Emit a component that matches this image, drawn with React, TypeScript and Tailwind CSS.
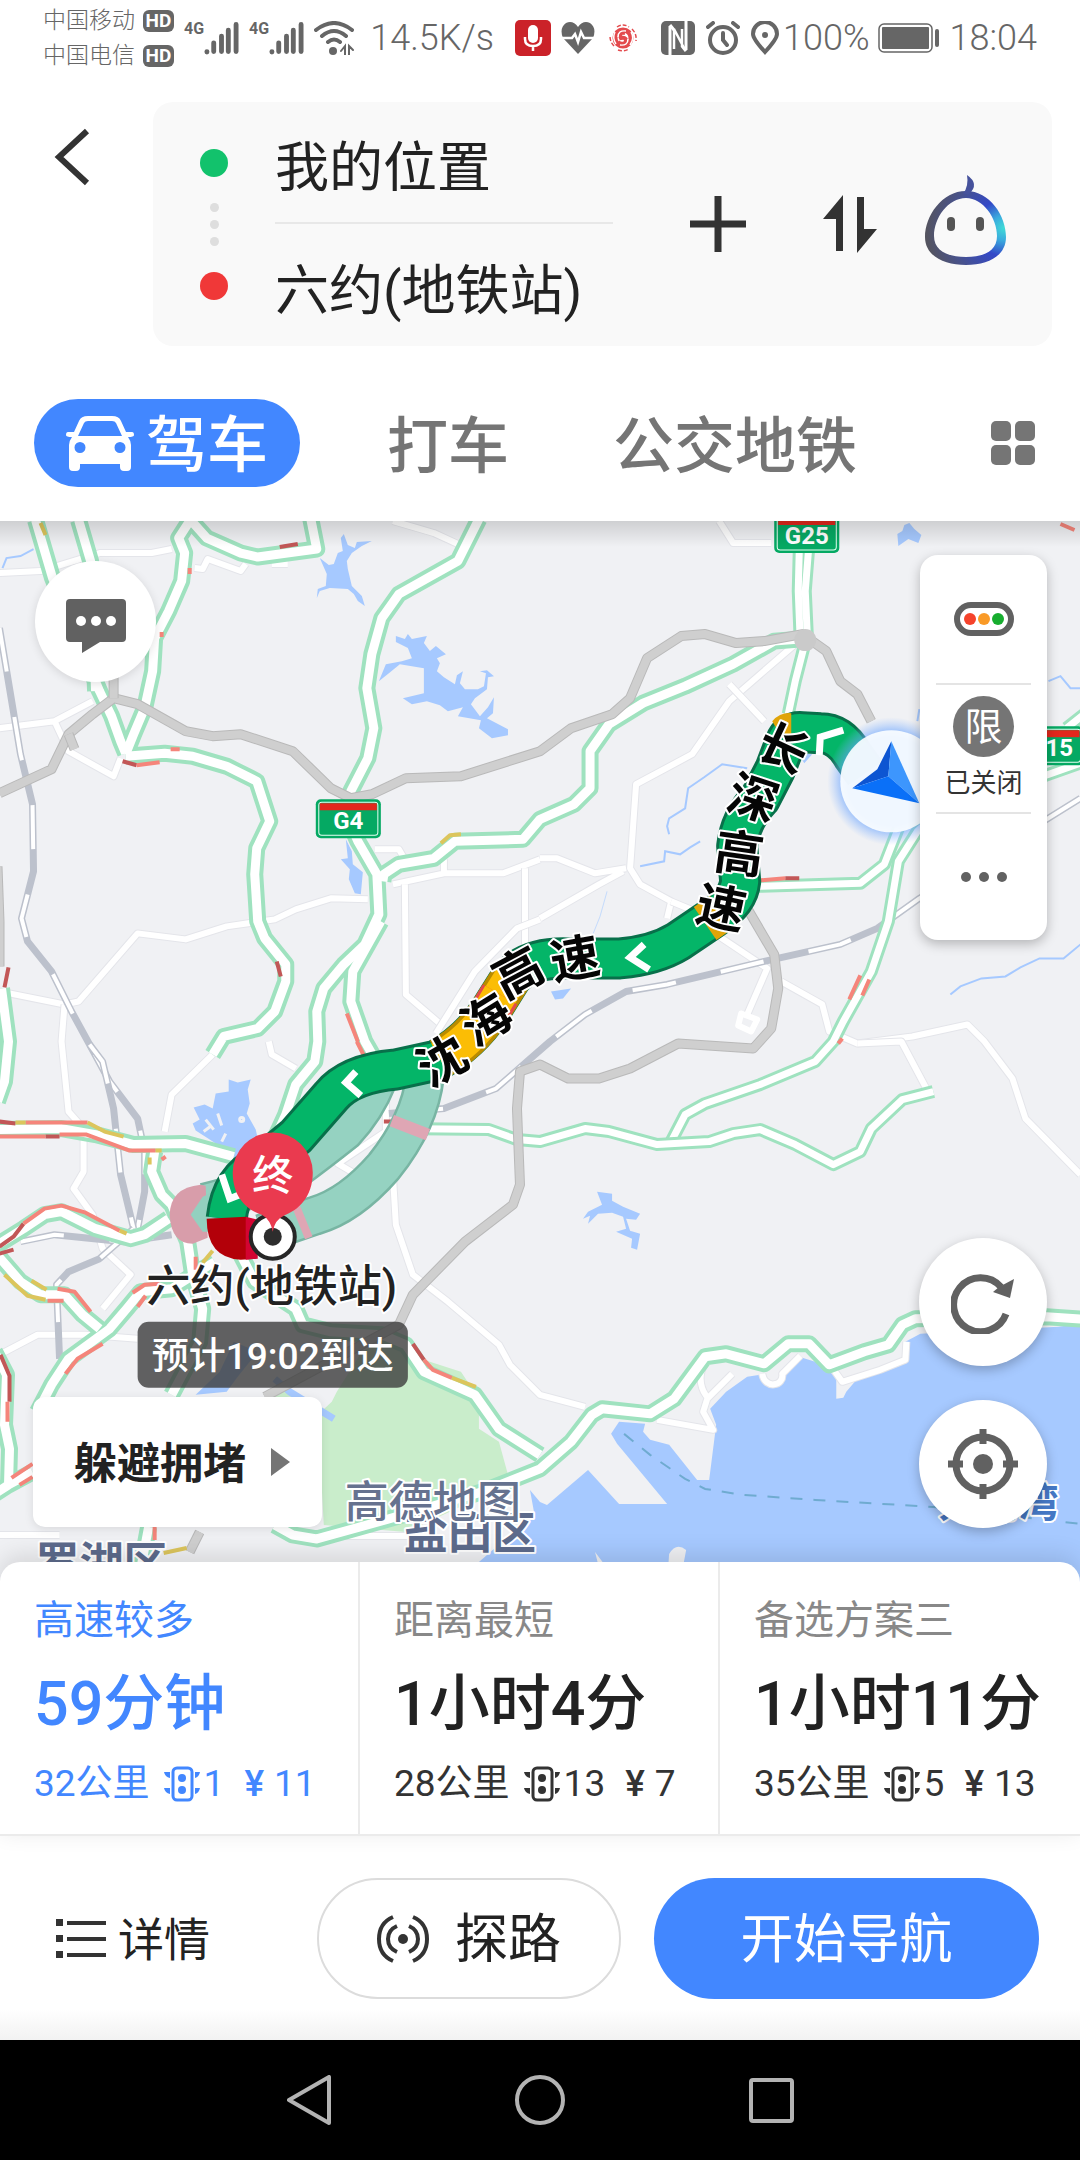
import { useState } from "react";
import type { ReactNode } from "react";

const ROUTES = [
  { name: "高速较多", time: "59分钟", distance: "32公里", lights: 1, toll: 11 },
  { name: "距离最短", time: "1小时4分", distance: "28公里", lights: 13, toll: 7 },
  { name: "备选方案三", time: "1小时11分", distance: "35公里", lights: 5, toll: 13 },
];

const SMALL_ROADS = [
  "M0 572 L41 570 L100 552 L152 552 L172 548",
  "M0 727 L55 720 L93 700 M55 720 L69 750 L114 775 L121 757",
  "M0 990 L65 1003 L79 1000 L138 932 L186 938 L227 925 L275 918 L296 908 L331 897 L368 898",
  "M65 1003 L62 1040 L69 1110 L84 1127 L84 1170 L74 1187 L93 1213 L103 1247 L131 1273 L103 1307",
  "M375 848 L399 848 L406 860 M393 883 L444 872 L503 872 L540 858 M444 858 V872",
  "M405 883 L406 993 L441 1023 M525 867 V947",
  "M436 1032 L475 970 L517 927 L540 918",
  "M393 520 L434 532 L458 543 M195 567 L203 568 L208 558 L241 570 L246 563 M272 563 H288",
  "M719 520 L733 542 L771 542",
  "M795 643 L729 700 L692 753 L636 783 L630 867 L640 883 L671 900 L667 917",
  "M729 683 L764 720 M540 857 L557 857 L595 872 L626 867 M540 917 L599 883 L623 870",
  "M671 900 L700 912 L722 937 L767 967 L747 1013",
  "M781 980 L822 1003 L829 1030 L857 1042 L912 1035 L967 1023 L984 1040 L1012 1077 L1025 1117 L1080 1173",
  "M857 1042 L901 1040 L926 1087",
  "M393 1173 L396 1223 L413 1273 L448 1300 L499 1343 L510 1363 L540 1393 L585 1405",
  "M269 1040 L272 1053 L296 1067 M213 1053 L172 1093 L165 1130",
  "M0 1353 L38 1333 L86 1333 L138 1337 M0 1533 H60 M324 1534 H420 M386 1096 V1130 L338 1162 L355 1172",
  "M705 1362 C696 1375 702 1390 708 1396 L732 1372 M708 1394 L703 1410 L713 1428 L657 1418",
  "M762 1372 C765 1388 784 1384 782 1372 L800 1354 M832 1366 L842 1380 L880 1368 L905 1358 L906 1340",
];

const RAILS = [
  "M0 627 L10 687 L21 753 L33 803 L34 870 L22 917 L28 940 L52 970 L72 1010 L90 1043 L110 1080 L138 1117 L145 1150 L145 1190 L138 1227",
  "M90 1043 L103 1060 L114 1107 L121 1173 L134 1227",
  "M21 1240 L55 1233 L124 1240 L172 1233 M134 1227 L100 1257 L69 1270 L57 1283 L60 1357",
  "M1080 797 L919 897 L877 927 L840 943 L764 960 L667 983 L626 990 L585 1013 L550 1040 L496 1087 L444 1107 L389 1112",
];

const BORDERS = [
  "M0 792 L52 768 L69 733 L93 713 L114 697 L138 703 L186 730 L213 735 L241 733 L293 750 L331 787 L351 797 L372 793 L406 777 L461 775 L540 750 L571 727 L612 713 L630 697 L647 657 L681 635 L705 633 L736 642 L764 640 L802 633 L826 650 L840 680 L857 693 L871 720",
  "M747 907 L774 953 L778 987 L771 1027 L753 1047 L678 1042 L630 1067 L599 1077 L568 1077 L540 1063 L520 1070 L517 1107 L520 1183 L513 1203 L465 1240 L413 1293 L399 1323 L265 1395",
  "M114 697 V670 M69 733 L75 748 M-2 865 L0 920 L0 965 M200 1530 L190 1550",
];

const HIGHWAYS = [
  "M36 519 L53 577 L100 690 L112 715 L121 740 L126 752",
  "M79 519 L91 560 L96 690",
  "M190 520 L179 537 L185 552 L182 580 L169 610 L155 637 L153 670 L145 707 L134 733 L126 753",
  "M190 518 L207 537 L241 552 L258 556 L317 548 L311 518",
  "M479 518 L458 560 L399 593 L382 617 L372 653 L367 687 L374 727 L368 757 L351 790 L347 815 L358 840 L377 873 L379 913 L365 943 L344 963 L324 987 L317 1010 L318 1040 L315 1060 L296 1083 L286 1113 L275 1137",
  "M381 920 L353 970 L351 1000 L365 1040 L385 1075",
  "M383 880 L384 873 L399 863 L434 857 L455 840 L523 838 L540 818 L574 803 L590 787 L590 750 L609 723 L643 702 L685 685 L733 663 L774 640 L800 638",
  "M126 755 L165 752 L193 755 L227 765 L257 780 L270 820 L257 847 L255 873 L258 920 L265 937 L286 963 L286 980 L275 1010 L258 1027 L224 1035 L213 1053",
  "M1090 1318 L1046 1315 L915 1317 L902 1323 L888 1343 L864 1350 L829 1363 L809 1342 L788 1342 L764 1362 L726 1352 L705 1355 L674 1397 L650 1412 L602 1407 L592 1413 L571 1440 L540 1467 L482 1490 L389 1517 L317 1537 L293 1533 L275 1523",
  "M241 1253 L255 1280 L296 1307 L303 1323 L331 1330 L382 1333 L406 1343 L424 1370 L475 1393 L499 1427 L540 1453",
  "M-5 1128 L62 1127 L96 1133 L134 1143 L186 1142 L234 1155",
  "M-5 1245 L24 1227 L45 1213 L62 1210 L96 1227 L131 1237 L145 1233 L169 1217",
  "M155 1150 L152 1170 L162 1193 L172 1203 L188 1240 L193 1273 L203 1307 L200 1340 L172 1393",
  "M-5 1250 L21 1280 L41 1293 L65 1293 L83 1313 L100 1327",
  "M215 1260 L172 1287 L141 1290 L127 1307 L110 1327 L69 1357 L52 1383 L38 1410",
  "M-5 1350 L7 1373 L5 1423 L10 1447 L9 1483 L33 1470 M-5 1492 L9 1483",
  "M2 987 L9 1040 L5 1080 L-2 1100 M149 1525 L142 1562",
];

const MAIN_ROADS = [
  "M809 540 L805 590 L807 633 L795 680 L788 713 M799 550 L798 590 L800 640",
  "M757 885 L860 882 L884 863 L898 827",
  "M930 818 L917 830 L898 860 L888 920 L871 970 L843 1020 L833 1040 L815 1060 L760 1083 L705 1102 L685 1113 L671 1140",
  "M398 1127 L489 1128 L517 1138 L540 1140 L585 1127 L609 1130 L657 1143 L709 1140 L733 1132 L760 1128 L795 1143 L833 1163 L860 1150 L871 1127 L902 1098 L933 1090",
  "M1040 776 L1085 760 M1066 727 L1085 712",
];

const TRAFFIC: [string, string][] = [
  ["#c25757", "M280 546 L298 543 M123 760 L137 764 M277 960 L281 975 M9 966 L5 986 M785 877 L799 877 M0 1245 L14 1235 L24 1222 M413 1342 L424 1358 M1 1353 L10 1374 L10 1400 M0 1120 L16 1122 M46 1135 H60 M0 1252 L14 1248 M384 1120 H396"],
  ["#f5857b", "M190 567 V573 M162 631 V636 M171 748 H180 M137 764 L160 761 M347 1012 L358 1040 M357 1040 L366 1058 M760 879 L785 877 M860 974 L849 998 M869 978 L862 994 M1060 523 L1074 529 M842 1037 L838 1042"],
  ["#f5857b", "M26 1121 H88 M0 1135 H46 M60 1133 H87 L130 1149 H156 M24 1222 L45 1207 L62 1204 L86 1211 L120 1229 M58 1287 L75 1290 L91 1310 M48 1299 H64 M160 1282 L145 1283 L133 1291 M146 1294 L138 1305 M103 1342 L78 1357 L66 1372 M424 1358 L433 1368 L452 1376 M8 1400 L8 1420 M12 1476 L33 1462 M20 1483 L33 1475 M155 1525 V1538 M162 1158 L166 1155 M196 1255 V1268"],
  ["#dcc55c", "M41 522 L46 534 M441 842 L450 834 L461 833 M16 1121 H26 M88 1121 L105 1130 L124 1135 M150 1156 V1163 M156 1149 H162 M120 1229 L127 1232 M5 1273 L28 1294 L46 1298 M32 1279 L47 1288 M213 1249 L203 1261 M452 1376 L476 1385 M164 1551 L187 1546"],
];

const WATER = [
  "M344 533 L348 544 L355 547 L357 541 L372 540 L362 545 L352 552 L347 560 L348 568 L352 585 L362 595 L365 605 L358 600 L354 593 L348 588 L330 587 L320 590 L317 597 L318 588 L326 585 L327 573 L320 557 L329 564 L334 563 L338 552 L343 550 L341 537 Z",
  "M396 635 L405 638 L408 633 L412 638 L427 635 L424 642 L430 650 L436 645 L446 653 L437 657 L440 662 L437 670 L444 676 L455 683 L457 674 L463 670 L460 682 L465 688 L478 688 L484 685 L486 672 L480 670 L487 669 L494 675 L488 676 L487 688 L475 697 L471 703 L480 715 L488 706 L494 696 L493 712 L487 717 L508 728 L508 734 L492 737 L479 727 L481 719 L458 715 L463 706 L448 710 L440 704 L427 700 L412 703 L403 697 L424 692 L424 667 L400 663 L389 672 L379 680 L386 663 L402 660 L412 657 L408 647 L396 641 Z",
  "M346 838 L352 850 L353 863 L363 871 L361 893 L355 892 L349 878 L350 868 L341 858 L348 857 Z",
  "M229 1078 L238 1081 L251 1078 L248 1088 L250 1102 L247 1112 L256 1128 L258 1137 L250 1150 L234 1158 L227 1150 L216 1142 L210 1138 L196 1129 L193 1122 L200 1118 L194 1106 L205 1103 L213 1107 L216 1092 L229 1090 Z",
  "M597 1190 L612 1192 L612 1199 L623 1205 L640 1212 L636 1218 L626 1217 L630 1229 L640 1232 L637 1248 L631 1246 L632 1237 L616 1230 L626 1227 L623 1215 L612 1211 L598 1212 L588 1222 L590 1214 L583 1217 L588 1210 L602 1203 Z",
  "M897 533 L902 530 L904 524 L909 522 L914 528 L921 534 L918 542 L908 538 L898 545 Z",
  "M551 990 L571 987 L563 997 L555 998 Z M798 752 L812 753 L804 762 Z",
  "M234 1340 L220 1370 L196 1393 L227 1390 L238 1375 L258 1350 Z",
];

const SEA =
  "M1080 1322 L1058 1325 L920 1332 L905 1340 L905 1360 L881 1370 L857 1377 L846 1390 L843 1396 L836 1397 L836 1373 L815 1360 L802 1356 L788 1364 L784 1378 L770 1382 L760 1373 L747 1375 L726 1390 L710 1407 L716 1423 L709 1478 L697 1478 L669 1443 L650 1438 L643 1430 L645 1422 L619 1420 L611 1432 L617 1442 L667 1502 L619 1502 L588 1468 L547 1503 L540 1500 L530 1488 L534 1510 L510 1533 L479 1560 L470 1600 L1080 1600 Z";

const RIVERS =
  "M747 767 L722 763 L704 776 L688 787 L685 807 L669 817 L667 825 L669 833 M700 840 L690 846 L680 853 L665 850 L664 860 L640 865 M950 993 L960 985 L981 977 L1005 975 L1020 966 L1039 957 L1063 957 L1080 943 M1048 680 L1060 675 L1070 687 L1080 687 M3 567 L7 557 L21 555 L34 548 M919 708 L917 720";

const ROUTE =
  "M865 772 L853 755 Q840 732 820 732 L802 731 Q789 730 785 742 L775 768 L760 797 Q740 818 737 845 L740 880 Q738 900 712 917 L678 940 Q655 954 620 957 L567 957 Q530 956 512 975 L490 1010 Q470 1040 437 1059 L396 1068 Q350 1072 331 1095 L296 1135 L262 1163 Q231 1178 227 1217";

const ALTERNATIVES = [
  "M378 1078 Q366 1108 345 1130 Q320 1150 290 1172 Q250 1190 205 1201",
  "M425 1075 Q420 1120 384 1165 Q350 1204 315 1214 L262 1232",
];

const ROAD_NAMES = [
  { ch: "长", x: 783, y: 747, r: 25 },
  { ch: "深", x: 753, y: 797, r: 18 },
  { ch: "高", x: 739, y: 852, r: 8 },
  { ch: "速", x: 721, y: 906, r: 12 },
  { ch: "速", x: 575, y: 957, r: -10 },
  { ch: "高", x: 518, y: 971, r: -28 },
  { ch: "海", x: 486, y: 1018, r: -32 },
  { ch: "沈", x: 442, y: 1059, r: -30 },
];

function Road({ d, outer, inner }: { d: string; outer: number; inner: number }) {
  return (
    <>
      <path d={d} stroke="#9fe2bf" strokeWidth={outer} />
      <path d={d} stroke="#fff" strokeWidth={inner} />
    </>
  );
}

function Shield({ x, y, w, children }: { x: number; y: number; w: number; children: string }) {
  return (
    <g>
      <rect x={x} y={y} width={w} height="39" rx="5" fill="#05a963" />
      <rect x={x + 3} y={y + 3} width={w - 6} height="33" rx="3" fill="none" stroke="#e6fff3" strokeWidth="1" />
      <rect x={x + 4} y={y + 4} width={w - 8} height="7" fill="#e2281d" />
      <text x={x + w / 2} y={y + 30} textAnchor="middle" fontSize="24" fontWeight="700" fill="#fff">
        {children}
      </text>
    </g>
  );
}

function MapCanvas() {
  return (
    <svg
      viewBox="0 520 1080 1060"
      preserveAspectRatio="xMidYMin slice"
      className="absolute inset-0 size-full"
      role="img"
      aria-label="路线地图"
    >
      <defs>
        <radialGradient id="glow">
          <stop offset="0.7" stopColor="#5b9bff" stopOpacity="0.8" />
          <stop offset="1" stopColor="#8bb8ff" stopOpacity="0" />
        </radialGradient>
        <linearGradient id="top-shade" x1="0" y1="0" x2="0" y2="1">
          <stop offset="0" stopColor="#000" stopOpacity="0.14" />
          <stop offset="1" stopColor="#000" stopOpacity="0" />
        </linearGradient>
      </defs>
      <rect y="500" width="1080" height="1100" fill="#f0f1f4" />
      <path
        d="M430 1360 L461 1370 L479 1397 L479 1427 L499 1440 L510 1480 L482 1495 L406 1530 L324 1523 L318 1413 L332 1400 L337 1390 L362 1350 L382 1340 Z M268 1388 L290 1384 L292 1395 L268 1396 Z"
        fill="#c9edcb"
      />
      <g fill="#a6c9ff">
        {WATER.map((d) => (
          <path key={d} d={d} />
        ))}
        <path d={SEA} />
      </g>
      <g fill="none" stroke="#f0f1f4" strokeWidth="3">
        <path d="M206 1118 L214 1128 M218 1112 L222 1124 M204 1130 L212 1124 M222 1140 L226 1132" />
        <circle cx="242" cy="1118" r="2" />
      </g>
      <path d="M667 1580 L669 1552 Q676 1540 686 1548 L680 1580 Z M595 1550 L604 1562 H598 Z" fill="#f0f1f4" />
      <path d={RIVERS} fill="none" stroke="#a6c9ff" strokeWidth="2" />
      <path d="M607 890 L600 915 L590 940" fill="none" stroke="#c5dbfb" strokeWidth="1" />
      <path d="M275 1377 L290 1390 L334 1417" fill="none" stroke="#a6c9ff" strokeWidth="7" />
      <path
        d="M624 1432 L650 1453 L685 1477 L705 1487 L743 1493 L815 1498 L933 1505 L1080 1522"
        fill="none"
        stroke="#6fabd0"
        strokeWidth="2"
        strokeDasharray="12 11"
      />

      <g fill="none" strokeLinejoin="round">
        {SMALL_ROADS.map((d) => (
          <g key={d}>
            <path d={d} stroke="#e4e5ea" strokeWidth="8" />
            <path d={d} stroke="#fff" strokeWidth="6" />
          </g>
        ))}
        <path d="M741 1012 L757 1018 L751 1030 L738 1024 Z" stroke="#fff" strokeWidth="6" />
        {RAILS.map((d) => (
          <g key={d}>
            <path d={d} stroke="#bcc1cc" strokeWidth="7" />
            <path d={d} stroke="#fff" strokeWidth="4" strokeDasharray="44 46" />
          </g>
        ))}
        {MAIN_ROADS.map((d) => (
          <Road key={d} d={d} outer={13} inner={7} />
        ))}
        {HIGHWAYS.map((d) => (
          <path key={d} d={d} stroke="#9fe2bf" strokeWidth="17" />
        ))}
        {HIGHWAYS.map((d) => (
          <path key={d} d={d} stroke="#fff" strokeWidth="9" />
        ))}
        {BORDERS.map((d) => (
          <g key={d}>
            <path d={d} stroke="#b9b9b9" strokeWidth="10" />
            <path d={d} stroke="#cfcfcf" strokeWidth="8" />
          </g>
        ))}
        <circle cx="805" cy="639" r="11" fill="#cacaca" />
        {TRAFFIC.map(([color, d]) => (
          <path key={d} d={d} stroke={color} strokeWidth="4" />
        ))}
      </g>

      {/* alternative routes */}
      <g fill="none" strokeLinejoin="round">
        {ALTERNATIVES.map((d) => (
          <path key={d} d={d} stroke="#78b5a3" strokeWidth="40" />
        ))}
        {ALTERNATIVES.map((d) => (
          <path key={d} d={d} stroke="#95d2c1" strokeWidth="35" />
        ))}
        <path d="M392 1119 L428 1133" stroke="#dfa6b4" strokeWidth="12" />
        <path d="M296 1204 L309 1236" stroke="#dfa6b4" strokeWidth="8" />
      </g>
      <path d="M201 1183 Q170 1186 170 1214 Q172 1242 193 1242 L208 1236 L206 1184 Z" fill="#d89daa" />
      <path d="M203 1195 L191 1213 L203 1230 L214 1230 V1190 Z" fill="#93d0bf" />

      {/* selected route */}
      <g fill="none" strokeLinejoin="round">
        <path d={ROUTE} stroke="#08704a" strokeWidth="42" />
        <path d={ROUTE} stroke="#04b568" strokeWidth="36" />
        <path d="M512 975 L490 1010 Q470 1040 440 1057" stroke="#b98b00" strokeWidth="41" />
        <path d="M512 975 L490 1010 Q470 1040 440 1057" stroke="#fbbd05" strokeWidth="34" />
        <path d="M500 993 L490 1010 L484 1019" stroke="#e34b4b" strokeWidth="40" />
        <path d="M500 993 L490 1010 L484 1019" stroke="#fbbd05" strokeWidth="34" />
        <path d="M721 911 L705 922" stroke="#e0a409" strokeWidth="40" />
      </g>
      <path d="M772 720 Q780 711 791 712 V735 L778 730 Z" fill="#e0a409" />
      <path d="M207 1217 L246 1215 L255 1232 L256 1257 L241 1258 Q207 1256 207 1217 Z" fill="#b30009" />
      <path d="M246 1215 L258 1218 V1257 L246 1258 Z" fill="#d30432" />
      <g fill="none" stroke="#fff" strokeWidth="7">
        <path d="M843 729 L820 736 L819 754" />
        <path d="M644 943 L630 956 L649 968" />
        <path d="M356 1070 L346 1081 L361 1094" />
        <path d="M222 1173 L230 1197 L240 1193" />
      </g>

      <circle cx="891" cy="780" r="64" fill="url(#glow)" />
      <circle cx="891" cy="780" r="51" fill="#fafdff" fillOpacity="0.93" />
      <path d="M891 740 L877 768 L852 787 L888 775 Z" fill="#0d55d2" />
      <path d="M891 740 L919 802 L888 775 Z" fill="#3d96fd" />
      <path d="M852 787 L888 775 L919 802 Z" fill="#0a70f8" />

      <Shield x={316} y={798} w={65}>G4</Shield>
      <Shield x={774} y={513} w={65}>G25</Shield>
      <Shield x={1018} y={725} w={65}>G15</Shield>

      <g
        textAnchor="middle"
        fontSize="49"
        fontWeight="700"
        fill="#050505"
        stroke="#fff"
        strokeWidth="4"
        strokeLinejoin="round"
        paintOrder="stroke"
      >
        {ROAD_NAMES.map((n) => (
          <text key={n.x} x="0" y="18" transform={`translate(${n.x} ${n.y}) rotate(${n.r})`}>
            {n.ch}
          </text>
        ))}
      </g>

      <g fontWeight="700" stroke="#fff" strokeWidth="4" strokeLinejoin="round" paintOrder="stroke">
        <text x="404" y="1547" fontSize="44" fill="#5d6b8c">盐田区</text>
        <text x="36" y="1577" fontSize="44" fill="#5d6b8c">罗湖区</text>
        <text x="938" y="1515" fontSize="40" fill="#4577c4">大鹏湾</text>
        <text x="345" y="1516" fontSize="44" fontWeight="500" fill="#66728f">高德地图</text>
        <text x="272" y="1300" fontSize="44" fontWeight="500" textAnchor="middle" fill="#222">六约(地铁站)</text>
      </g>

      {/* destination pin */}
      <circle cx="273" cy="1235" r="22" fill="#fff" stroke="#262626" strokeWidth="4" />
      <circle cx="273" cy="1235" r="9" fill="#2d2d2d" />
      <path d="M273 1131 A40 40 0 0 1 313 1171 C313 1196 298 1209 284 1214 Q275 1218 273 1230 Q271 1218 262 1213 C248 1209 233 1196 233 1171 A40 40 0 0 1 273 1131 Z" fill="#ea3a4f" />
      <text x="273" y="1188" textAnchor="middle" fontSize="41" fontWeight="500" fill="#fff">终</text>

      <rect x="138" y="1320" width="270" height="66" rx="11" fill="#3c3c3c" fillOpacity="0.8" />
      <text x="273" y="1367" textAnchor="middle" fontSize="37" fontWeight="500" fill="#fff">
        预计19:02到达
      </text>

      <rect y="520" width="1080" height="26" fill="url(#top-shade)" />
    </svg>
  );
}

function HdBadge() {
  return (
    <span className="flex h-[22px] w-[31px] items-center justify-center rounded-md bg-[#666] text-[19px] leading-none font-bold text-white">
      HD
    </span>
  );
}

function Signal() {
  return (
    <div className="flex h-[34px] items-start">
      <span className="text-base leading-4 font-bold">4G</span>
      <svg viewBox="0 0 36 34" className="h-[34px] w-[35px]" fill="none" stroke="#666" strokeWidth="5" strokeLinecap="round">
        <path d="M3 31 V31.500 M10 22 V31 M18 15 V31 M25 9 V31 M33 3 V31" />
      </svg>
    </div>
  );
}

function StatusBar() {
  return (
    <div className="flex h-[76px] items-center justify-between pr-[43px] pl-[43px] text-[36px] leading-none font-light text-[#666]">
      <div className="flex items-center">
        <div className="flex flex-col gap-3 text-[23px] leading-[23px]">
          <div className="flex items-center gap-2">中国移动<HdBadge /></div>
          <div className="flex items-center gap-2">中国电信<HdBadge /></div>
        </div>
        <div className="ml-2.5 flex items-center gap-2.5">
          <Signal />
          <Signal />
          <svg viewBox="0 0 40 34" className="h-[34px] w-10" fill="none" stroke="#666" strokeWidth="4" strokeLinecap="round">
            <path d="M2 9 Q20 -5 38 9 M8 15 Q20 5 32 15 M14 21 Q20 16 26 21" />
            <circle cx="19" cy="30" r="4" fill="#666" stroke="none" />
            <path d="M27 30 L31 25 V34 M35 34 V25 L39 29" strokeWidth="2" />
          </svg>
        </div>
        <span className="ml-4">14.5K/s</span>
      </div>
      <div className="flex items-center">
        <div className="mr-6 flex items-center gap-2.5">
          <svg viewBox="0 0 36 36" className="size-9">
            <rect width="36" height="36" rx="5" fill="#cb2229" />
            <rect x="13" y="5" width="10" height="18" rx="5" fill="#fff" />
            <path d="M10 17 V19 Q10 26 18 26 Q26 26 26 19 V17 M18 26 V31" fill="none" stroke="#fff" strokeWidth="2.5" />
          </svg>
          <svg viewBox="0 0 34 32" className="h-8 w-[34px]" fill="#666">
            <path d="M17 32 L2 16 Q-2 6 5 1 Q12 -2 17 5 Q22 -2 29 1 Q36 6 32 16 Z" />
            <path d="M0 16 H11 L14 12 L17 20 L20 10 L23 16 H34" fill="none" stroke="#fff" strokeWidth="2.5" />
          </svg>
          <svg viewBox="0 0 28 28" className="ml-1 size-7" fill="none" stroke="#e34a4d">
            <circle cx="14" cy="14" r="8" strokeWidth="5" />
            <path d="M16 9 Q9 8 12 14 Q19 13 16 19 Q12 21 9 18" strokeWidth="4" />
            <path d="M17 7 Q9 6 9 13 M11 21 Q19 22 19 15 M22 8 Q26 14 21 21 M6 8 Q3 14 7 20" stroke="#fff" strokeWidth="1.5" />
            <path d="M5 22 Q1 18 1 12 M23 5 Q28 10 27 17 M8 3 Q14 -1 20 3 M9 26 Q14 28 20 25" strokeWidth="1.5" strokeDasharray="4 2" />
          </svg>
        </div>
        <div className="flex items-center gap-[11px]">
          <svg viewBox="0 0 34 34" className="size-[34px]">
            <rect width="34" height="34" rx="5" fill="#666" />
            <path d="M9 5 V34 M25 0 V29" stroke="#fff" strokeWidth="3" />
            <path d="M13 8 L23 27 M13 8 V28 M21 8 V26" stroke="#fff" strokeWidth="2.5" />
            <path d="M9 4 L13 9 M25 30 L21 25" stroke="#fff" strokeWidth="3" />
          </svg>
          <svg viewBox="0 0 34 34" className="size-[34px]" fill="none" stroke="#666" strokeWidth="4" strokeLinecap="round">
            <circle cx="17" cy="19" r="13" />
            <path d="M17 12 V19 L21 24 M2 6 L7 2 M32 6 L27 2" />
          </svg>
          <svg viewBox="0 0 28 34" className="h-[34px] w-7" fill="none" stroke="#666" strokeWidth="4">
            <path d="M14 31 Q2 18 2 13 A12 12 0 0 1 26 13 Q26 18 14 31 Z" />
            <circle cx="14" cy="14" r="3" fill="#666" stroke="none" />
          </svg>
        </div>
        <span className="ml-1">100%</span>
        <svg viewBox="0 0 62 30" className="ml-2 h-[30px] w-[62px]">
          <rect x="1" y="1" width="53" height="28" rx="5" fill="none" stroke="#666" strokeWidth="1.5" />
          <rect x="4" y="4" width="47" height="22" rx="1" fill="#666" />
          <rect x="57" y="6" width="4" height="18" rx="2" fill="#666" />
        </svg>
        <span className="ml-2.5">18:04</span>
      </div>
    </div>
  );
}

function Planner() {
  return (
    <div className="flex items-start pr-7 pl-[46px]">
      <button type="button" aria-label="返回" className="mt-[26px] shrink-0 pr-[62px]">
        <svg viewBox="0 0 45 58" className="h-[58px] w-[45px]" fill="none" stroke="#333" strokeWidth="6">
          <path d="M41 3 L13 29 L41 55" />
        </svg>
      </button>
      <div className="flex flex-1 items-center rounded-[20px] bg-[#f9f9f9] pr-[44px] pl-[47px]">
        <div className="flex h-[244px] flex-col items-center justify-center gap-[26px]">
          <span className="size-7 rounded-full bg-[#12c26c]" />
          <span className="flex flex-col gap-2">
            <i className="size-[9px] rounded-full bg-[#dedede]" />
            <i className="size-[9px] rounded-full bg-[#dedede]" />
            <i className="size-[9px] rounded-full bg-[#dedede]" />
          </span>
          <span className="size-7 rounded-full bg-[#f03838]" />
        </div>
        <div className="ml-[47px] flex-1 divide-y-2 divide-[#e8e8e8]">
          <input aria-label="起点" defaultValue="我的位置" className="block h-[122px] w-full bg-transparent pt-0.5 text-[54px] text-[#222] outline-none" />
          <input aria-label="终点" defaultValue="六约(地铁站)" className="block h-[122px] w-full bg-transparent pt-0.5 text-[54px] text-[#222] outline-none" />
        </div>
        <button type="button" aria-label="添加途经点" className="ml-[77px]">
          <svg viewBox="0 0 56 56" className="size-14" stroke="#333" strokeWidth="7">
            <path d="M28 0 V56 M0 28 H56" />
          </svg>
        </button>
        <button type="button" aria-label="交换起终点" className="ml-[77px]">
          <svg viewBox="0 0 54 58" className="h-[58px] w-[54px]" fill="#333">
            <path d="M20 0 V56 H13 V24 H0 Z M34 58 V2 H41 V34 H54 Z" />
          </svg>
        </button>
        <button type="button" aria-label="语音助手" className="mb-2 ml-[47px]">
          <svg viewBox="0 0 84 92" className="h-[92px] w-[84px]">
            <defs>
              <radialGradient id="bot" gradientUnits="userSpaceOnUse" cx="80" cy="54" r="78">
                <stop offset="0" stopColor="#40dcd6" />
                <stop offset="0.16" stopColor="#3aaade" />
                <stop offset="0.36" stopColor="#3348c8" />
                <stop offset="0.7" stopColor="#48528c" />
                <stop offset="1" stopColor="#54545f" />
              </radialGradient>
            </defs>
            <path
              fillRule="evenodd"
              fill="url(#bot)"
              d="M42 17 C66 17 82 42 82 63 C82 82 64 91 42 91 C20 91 1 82 1 63 C1 42 18 17 42 17 Z M42 24 C24 24 10 44 10 62 C10 77 24 83 42 83 C60 83 73 77 73 62 C73 44 59 24 42 24 Z"
            />
            <path d="M43 1 Q56 10 45 20 L39 20 Q45 12 43 1 Z" fill="#46529c" />
            <rect x="23" y="43" width="8" height="14" rx="4" fill="#555" />
            <rect x="52" y="43" width="8" height="14" rx="4" fill="#555" />
          </svg>
        </button>
      </div>
    </div>
  );
}

function TransportTabs() {
  const [active, setActive] = useState("驾车");
  const color = (name: string) => (active === name ? "text-[#4287ff]" : "text-[#757575]");
  return (
    <nav className="mt-[53px] flex h-[122px] items-start pr-[45px] pl-[34px] text-[61px] leading-[96px] font-medium">
      <button
        type="button"
        onClick={() => setActive("驾车")}
        className="flex h-[88px] items-center gap-3 rounded-full bg-[#4287ff] px-8 text-white"
      >
        <svg viewBox="0 0 68 56" className="h-14 w-[68px]" fill="#fff">
          <path
            fillRule="evenodd"
            d="M22 1 H46 Q53 1 55 6 L60 17 H66 Q68 17 68 20 Q68 22 62 22 Q65 26 65 30 V52 Q65 56 61 56 H58 Q54 56 54 52 V49 H14 V52 Q14 56 10 56 H7 Q3 56 3 52 V30 Q3 26 6 22 Q0 22 0 20 Q0 17 2 17 H8 L13 6 Q15 1 22 1 Z M22 6 Q19 6 18 8 L12 21 H56 L50 8 Q49 6 46 6 Z M14 27 A5.500 5.500 0 1 0 14 38 A5.500 5.500 0 1 0 14 27 Z M54 27 A5.500 5.500 0 1 0 54 38 A5.500 5.500 0 1 0 54 27 Z"
          />
        </svg>
        <span className="pt-1.5">驾车</span>
      </button>
      <button type="button" onClick={() => setActive("打车")} className={`ml-[87px] ${color("打车")}`}>
        打车
      </button>
      <button type="button" onClick={() => setActive("公交地铁")} className={`ml-[104px] ${color("公交地铁")}`}>
        公交地铁
      </button>
      <button type="button" aria-label="更多出行方式" className="mt-[22px] ml-auto grid grid-cols-2 gap-1">
        <i className="size-5 rounded-[5px] bg-[#757575]" />
        <i className="size-5 rounded-[5px] bg-[#757575]" />
        <i className="size-5 rounded-[5px] bg-[#757575]" />
        <i className="size-5 rounded-[5px] bg-[#757575]" />
      </button>
    </nav>
  );
}

function RoundButton({ label, children }: { label: string; children: ReactNode }) {
  return (
    <button
      type="button"
      aria-label={label}
      className="flex size-32 items-center justify-center rounded-full bg-white shadow-[0_4px_12px_rgba(0,0,0,0.25)]"
    >
      {children}
    </button>
  );
}

function MapControls() {
  return (
    <>
      <button
        type="button"
        aria-label="反馈"
        className="absolute top-10 left-[35px] flex size-[121px] items-center justify-center rounded-full bg-white shadow-[0_2px_10px_rgba(0,0,0,0.12)]"
      >
        <svg viewBox="0 0 60 54" className="mt-2 h-[54px] w-[60px]">
          <path d="M4 0 H56 Q60 0 60 4 V39 Q60 43 56 43 H34 L16 54 V43 H4 Q0 43 0 39 V4 Q0 0 4 0 Z" fill="#616161" />
          <circle cx="15" cy="22" r="5" fill="#fff" />
          <circle cx="30" cy="22" r="5" fill="#fff" />
          <circle cx="45" cy="22" r="5" fill="#fff" />
        </svg>
      </button>

      <div className="absolute top-[34px] right-[33px] flex w-[127px] flex-col divide-y-2 divide-[#e4e4e4] rounded-[18px] bg-white px-4 shadow-[0_4px_12px_rgba(0,0,0,0.25)]">
        <button type="button" aria-label="实时路况" className="flex h-[130px] items-center justify-center">
          <svg viewBox="0 0 60 34" className="h-[34px] w-[60px]">
            <rect x="3" y="3" width="54" height="28" rx="14" fill="#fff" stroke="#616161" strokeWidth="6" />
            <circle cx="16" cy="17" r="6" fill="#f5432c" />
            <circle cx="30" cy="17" r="6" fill="#f99a27" />
            <circle cx="44" cy="17" r="6" fill="#17ad2f" />
          </svg>
        </button>
        <button type="button" className="flex h-[129px] flex-col items-center justify-center gap-2 text-[26px] leading-9 whitespace-nowrap text-[#333]">
          <span className="flex size-[61px] items-center justify-center rounded-full bg-[#757575] text-[38px] text-white">限</span>
          已关闭
        </button>
        <button type="button" aria-label="更多" className="flex h-[126px] items-center justify-center gap-2">
          <i className="size-2.5 rounded-full bg-[#616161]" />
          <i className="size-2.5 rounded-full bg-[#616161]" />
          <i className="size-2.5 rounded-full bg-[#616161]" />
        </button>
      </div>

      <div className="absolute right-[33px] bottom-[54px] flex flex-col gap-[34px]">
        <RoundButton label="刷新路线">
          <svg viewBox="0 0 64 64" className="size-16" fill="none" stroke="#616161" strokeWidth="7">
            <path d="M50 17 A27 27 0 1 0 55 44" />
            <path d="M63 9 L59 28 L42 22 L48 17 Z" fill="#616161" stroke="none" />
          </svg>
        </RoundButton>
        <RoundButton label="定位">
          <svg viewBox="0 0 70 70" className="size-[70px]" fill="none" stroke="#616161" strokeWidth="7">
            <circle cx="35" cy="35" r="27" />
            <path d="M35 0 V15 M35 55 V70 M0 35 H15 M55 35 H70" />
            <circle cx="35" cy="35" r="10" fill="#616161" stroke="none" />
          </svg>
        </RoundButton>
      </div>

      <button
        type="button"
        className="absolute bottom-[55px] left-[33px] flex h-[130px] items-center gap-6 rounded-[12px] bg-white pr-8 pl-[41px] text-[43px] font-bold text-[#222] shadow-[0_2px_10px_rgba(0,0,0,0.1)]"
      >
        <span className="pt-1">躲避拥堵</span>
        <svg viewBox="0 0 20 28" className="h-7 w-5" fill="#757575">
          <path d="M1 0 L20 14 L1 28 Z" />
        </svg>
      </button>
    </>
  );
}

function LightIcon() {
  return (
    <svg viewBox="0 0 36 36" className="h-9 w-9" fill="currentColor">
      <rect x="9" y="2" width="19" height="32" rx="4" fill="none" stroke="currentColor" strokeWidth="3" />
      <circle cx="18" cy="12" r="4" />
      <circle cx="18" cy="24" r="4" />
      <path d="M0 6 H6 V12 Q1 11 0 6 Z M0 22 H6 V28 Q1 27 0 22 Z M36 6 H31 V12 Q35 11 36 6 Z M36 22 H31 V28 Q35 27 36 22 Z" />
    </svg>
  );
}

function RouteOptions() {
  const [selected, setSelected] = useState(0);
  return (
    <section className="relative -mt-5 grid grid-cols-3 divide-x-2 divide-[#ebebeb] rounded-t-[20px] border-b-2 border-[#ebebeb] bg-white shadow-[0_-6px_24px_rgba(0,0,0,0.12)]">
      {ROUTES.map((route, i) => (
        <button
          key={route.name}
          type="button"
          aria-pressed={i === selected}
          onClick={() => setSelected(i)}
          className={`flex flex-col items-start pt-[35px] pb-[26px] pl-[34px] text-left whitespace-nowrap ${i === selected ? "text-[#4287ff]" : "text-[#222]"}`}
        >
          <span className={`text-[40px] leading-[48px] ${i === selected ? "" : "text-[#888]"}`}>{route.name}</span>
          <span className="mt-[23px] text-[61px] leading-[72px] font-medium">{route.time}</span>
          <span className={`mt-5 flex items-center text-[37px] leading-[48px] ${i === selected ? "" : "text-[#333]"}`}>
            {route.distance}
            <span className="ml-3.5 flex items-center gap-1">
              <LightIcon />
              {route.lights}
            </span>
            <span className="mr-2.5 ml-5 font-medium">¥</span>
            <span>{route.toll}</span>
          </span>
        </button>
      ))}
    </section>
  );
}

function ActionBar() {
  return (
    <div className="flex items-center bg-white bg-linear-to-t from-[#f2f2f2] to-white to-15% pt-[42px] pr-[41px] pb-[41px] pl-[56px]">
      <button type="button" className="flex w-[261px] shrink-0 items-center gap-3 text-[46px] text-[#222]">
        <svg viewBox="0 0 50 40" className="h-10 w-[50px]" fill="#333">
          <path d="M0 0 H7 V7 H0 Z M11 2 H50 V6 H11 Z M0 16 H7 V23 H0 Z M11 18 H50 V22 H11 Z M0 32 H7 V39 H0 Z M11 34 H50 V38 H11 Z" />
        </svg>
        <span className="pt-1">详情</span>
      </button>
      <button
        type="button"
        className="flex h-[121px] w-[304px] shrink-0 items-center justify-center gap-[26px] rounded-full border-2 border-[#dcdcdc] text-[53px] text-[#222]"
      >
        <svg viewBox="0 0 52 48" className="h-12 w-[52px]" fill="none" stroke="#333" strokeWidth="4">
          <path d="M16 2 Q2 8 2 24 Q2 40 16 46 M36 2 Q50 8 50 24 Q50 40 36 46 M20 11 Q11 15 11 24 Q11 33 20 37 M32 11 Q41 15 41 24 Q41 33 32 37" />
          <circle cx="26" cy="24" r="5" fill="#333" stroke="none" />
        </svg>
        <span className="pt-1">探路</span>
      </button>
      <button type="button" className="ml-[33px] h-[121px] flex-1 rounded-full bg-[#4287ff] pt-1 text-[53px] text-white">
        开始导航
      </button>
    </div>
  );
}

function SystemNav() {
  return (
    <div className="flex h-[120px] items-center justify-center gap-[184px] bg-black">
      <button type="button" aria-label="后退">
        <svg viewBox="0 0 44 50" className="h-[50px] w-11" fill="none" stroke="#b3b3b3" strokeWidth="4" strokeLinejoin="round">
          <path d="M42 2 V48 L2 25 Z" />
        </svg>
      </button>
      <button type="button" aria-label="主屏幕" className="size-[50px] rounded-full border-4 border-[#b3b3b3]" />
      <button type="button" aria-label="最近任务" className="size-[45px] rounded-[4px] border-4 border-[#b3b3b3]" />
    </div>
  );
}

export default function App() {
  return (
    <div className="flex min-h-screen flex-col bg-white font-['Roboto','Noto_Sans_CJK_SC',sans-serif]">
      <header>
        <StatusBar />
        <div className="pt-[26px]">
          <Planner />
        </div>
        <TransportTabs />
      </header>
      <main className="relative min-h-[900px] flex-1 overflow-hidden">
        <MapCanvas />
        <MapControls />
      </main>
      <RouteOptions />
      <ActionBar />
      <SystemNav />
    </div>
  );
}
